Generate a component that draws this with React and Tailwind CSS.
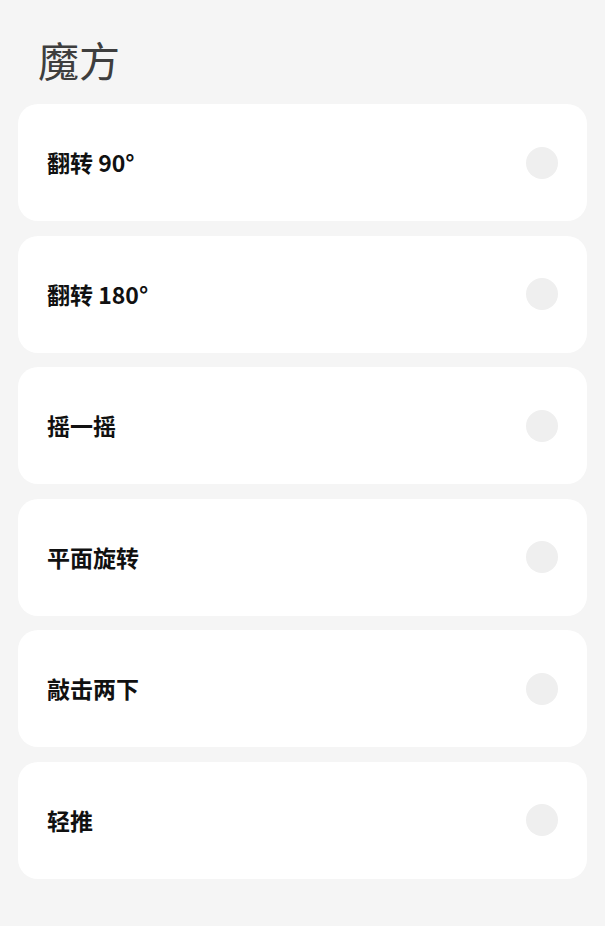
export default function App() {
  const items = ["翻转 90°", "翻转 180°", "摇一摇", "平面旋转", "敲击两下", "轻推"];
  return (
    <div
      className="min-h-[926px] w-[605px] bg-[#f5f5f5] px-[18px] pt-[35px]"
      style={{ fontFamily: '"Noto Sans CJK SC", "Noto Sans", sans-serif' }}
    >
      <h1 className="pl-[20px] text-[41px] leading-[48px] font-normal text-[#3e3e3e]">魔方</h1>
      <div className="mt-[21px] flex flex-col gap-[14.5px]">
        {items.map((t) => (
          <div
            key={t}
            className="flex h-[117px] items-center justify-between rounded-[20px] bg-white pl-[29px] pr-[29px]"
          >
            <span className="text-[23px] font-bold text-[#111111]">{t}</span>
            <span className="h-[32px] w-[32px] rounded-full bg-[#efefef]" />
          </div>
        ))}
      </div>
    </div>
  );
}
